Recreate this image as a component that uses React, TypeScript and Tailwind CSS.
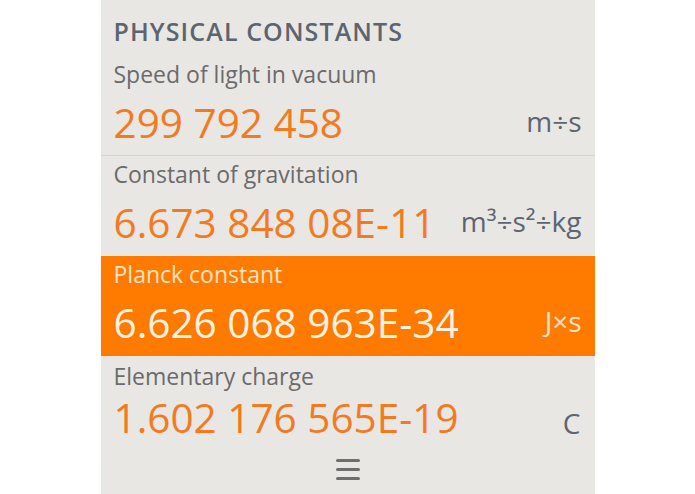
type Constant = {
  name: string;
  value: string;
  unit: string;
  active?: boolean;
};

const constants: Constant[] = [
  { name: "Speed of light in vacuum", value: "299 792 458", unit: "m÷s" },
  { name: "Constant of gravitation", value: "6.673 848 08E-11", unit: "m³÷s²÷kg" },
  { name: "Planck constant", value: "6.626 068 963E-34", unit: "J×s", active: true },
];

function Row({ c, divider }: { c: Constant; divider: boolean }) {
  return (
    <div
      className={`flex h-[100px] flex-col px-[13px] pt-[4px] ${
        c.active ? "h-[96px] bg-[#fe7b00]" : ""
      } ${divider ? "border-b border-[#d5d3d0]" : ""}`}
    >
      <div
        className={`h-[28px] text-[23px] leading-[28px] ${
          c.active ? "text-[#fde3c8]" : "text-[#6b6b6b]"
        }`}
      >
        {c.name}
      </div>
      <div className="mt-[13px] flex items-start justify-between">
        <span
          className={`whitespace-nowrap text-[40.5px] leading-[44px] ${
            c.active ? "text-[#fff1e3]" : "text-[#f47a1e]"
          }`}
        >
          {c.value}
        </span>
        <span
          className={`mt-[4px] whitespace-nowrap text-[28px] leading-[32px] ${
            c.active ? "text-[#fde3c8]" : "text-[#5d6570]"
          }`}
        >
          {c.unit}
        </span>
      </div>
    </div>
  );
}

export default function App() {
  return (
    <div className="flex h-[494px] w-full justify-center bg-white font-['Open_Sans',sans-serif]">
      <div className="flex h-full w-[494px] flex-col overflow-hidden bg-[#e9e7e4]">
        <div className="h-[56px] px-[13px] pt-[15px] text-[25px] font-semibold leading-[32px] tracking-[1.1px] text-[#5c656f]">
          PHYSICAL CONSTANTS
        </div>

        {constants.map((c, i) => (
          <Row key={c.name} c={c} divider={i === 0} />
        ))}

        {/* last item, partly under the menu bar */}
        <div className="flex flex-col px-[13px] pt-[6px]">
          <div className="h-[28px] text-[23px] leading-[28px] text-[#6b6b6b]">
            Elementary charge
          </div>
          <div className="mt-[6px] flex items-start justify-between">
            <span className="whitespace-nowrap text-[40.5px] leading-[44px] text-[#f47a1e]">
              1.602 176 565E-19
            </span>
            <span className="mr-[1px] mt-[11px] text-[28px] leading-[32px] text-[#5d6570]">
              C
            </span>
          </div>
        </div>

        <div className="flex flex-1 items-center justify-center pt-[4px]">
          <div className="flex w-[24px] flex-col gap-[6px]">
            <span className="h-[3px] rounded-full bg-[#6e6e6e]" />
            <span className="h-[3px] rounded-full bg-[#6e6e6e]" />
            <span className="h-[3px] rounded-full bg-[#6e6e6e]" />
          </div>
        </div>
      </div>
    </div>
  );
}
